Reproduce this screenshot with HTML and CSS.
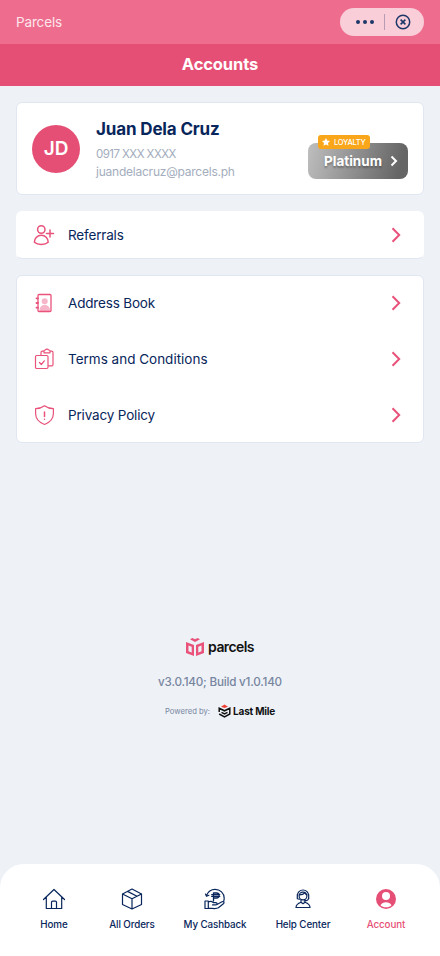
FILE: index.html
```html
<!DOCTYPE html>
<html lang="en">
<head>
<meta charset="utf-8">
<meta name="viewport" content="width=device-width, initial-scale=1">
<title>Accounts</title>
<link rel="stylesheet" href="styles.css">
</head>
<body>
<div class="app">
  <header class="topbar">
    <span class="app-name">Parcels</span>
    <div class="capsule">
      <svg width="18" height="4" viewBox="0 0 18 4" fill="#1c3768"><circle cx="2" cy="2" r="2"/><circle cx="9" cy="2" r="2"/><circle cx="16" cy="2" r="2"/></svg>
      <span class="divider"></span>
      <svg width="16" height="16" viewBox="0 0 16 16" fill="none" stroke="#1c3768" stroke-width="1.5"><circle cx="8" cy="8" r="6.700"/><path d="M5.600 5.600l4.800 4.800M10.400 5.600l-4.800 4.800" stroke-width="1.600"/></svg>
    </div>
  </header>
  <h1 class="title"><span>Accounts</span></h1>
  <main class="content">
    <section class="card profile">
      <div class="avatar"><span>JD</span></div>
      <div class="details">
        <h2 class="name">Juan Dela Cruz</h2>
        <p class="phone">0917 XXX XXXX</p>
        <p class="email">juandelacruz@parcels.ph</p>
      </div>
      <a class="tier">
        <span class="tier-name">Platinum</span>
        <svg width="8" height="12" viewBox="0 0 8 12" fill="none" stroke="#fff" stroke-width="2"><path d="M1.500 1.500L6 6l-4.500 4.500"/></svg>
        <span class="loyalty">
          <svg width="8" height="8" viewBox="0 0 24 24" fill="#fff"><path d="M12 0l3.700 7.800 8.300 1.200-6 6 1.500 8.500L12 19.400 4.500 23.500 6 15 0 9l8.300-1.200z"/></svg>
          <span>LOYALTY</span>
        </span>
      </a>
    </section>

    <nav class="card single">
      <a class="row">
        <svg class="icon" viewBox="0 0 24 24"><circle cx="9.300" cy="6.500" r="3.700"/><path d="M9.300 12.300c3.900 0 6.900 3.100 6.900 6.900-1.700 1.600-4.100 2.200-6.900 2.200s-5.200-.6-6.900-2.200c0-3.800 3-6.900 6.900-6.900zM14.500 10.500h7M18 7v7"/></svg>
        <span class="label tight">Referrals</span>
        <svg class="chevron" viewBox="0 0 10 16"><path d="M1.500 1.300L8.200 8l-6.700 6.700"/></svg>
      </a>
    </nav>

    <nav class="card list">
      <a class="row">
        <svg class="icon medium" viewBox="0 0 24 24"><g fill="#f6b5c8" stroke="none"><circle cx="12.700" cy="10.200" r="3"/><path d="M7.500 20v-1a5 5 0 0 1 10.500 0v1z"/></g><rect x="6" y="3.500" width="13" height="17" rx="1"/><path d="M4.500 7.300h1.500M4.500 12h1.500M4.500 16.700h1.500" stroke-width="1.800"/></svg>
        <span class="label tight">Address Book</span>
        <svg class="chevron" viewBox="0 0 10 16"><path d="M1.500 1.300L8.200 8l-6.700 6.700"/></svg>
      </a>
      <a class="row">
        <svg class="icon thin" viewBox="0 0 24 24"><rect x="3.500" y="8.500" width="12.500" height="13" rx="1.200"/><path d="M7.500 15.500l1.800 2 3-3.700M9 8V5.500c0-.8.500-1.300 1.300-1.300h1.700M18 4.200h1.700c.8 0 1.300.5 1.300 1.300v12c0 .8-.5 1.300-1.300 1.300H16.500M12 5.800V4c0-.6.400-1 1-1h.4c.6-1.200 2.500-1.200 3.200 0h.4c.6 0 1 .4 1 1v1.800z"/></svg>
        <span class="label">Terms and Conditions</span>
        <svg class="chevron" viewBox="0 0 10 16"><path d="M1.500 1.300L8.200 8l-6.700 6.700"/></svg>
      </a>
      <a class="row">
        <svg class="icon thin" viewBox="0 0 24 24"><path d="M12.500 2.700c2.600 2 5.500 2.900 8.900 2.900v5c0 4.900-3.500 8.900-8.900 10.900-5.400-2-8.900-6-8.900-10.900v-5c3.400 0 6.300-.9 8.900-2.900z"/><path d="M12.500 9v4.500M12.500 16.200v.1" stroke-width="1.500"/></svg>
        <span class="label tight">Privacy Policy</span>
        <svg class="chevron" viewBox="0 0 10 16"><path d="M1.500 1.300L8.200 8l-6.700 6.700"/></svg>
      </a>
    </nav>
  </main>

  <section class="about">
    <div class="brand">
      <svg width="18" height="20" viewBox="0 0 18 20" fill="#e9527a"><path fill-rule="evenodd" d="M0 5l8 3v11L0 16zM2.500 8.500v5.700l3.200 1.300V9.700zM18 5l-8 3v11l8-3zM15.500 8.500v5.700l-3.200 1.300V9.700zM4 2.300l2.400-1.300L9 2.300l2.600-1.300L14 2.300 9 5z"/></svg>
      <span>parcels</span>
    </div>
    <p class="version">v3.0.140; Build v1.0.140</p>
    <div class="powered">
      <span class="by">Powered by:</span>
      <svg width="13" height="14" viewBox="0 0 13 14" fill="none"><path d="M3 2.800L6.500 .5 10 2.800 6.500 4z" fill="#ee4035"/><path d="M1.200 8V4.300l5.300 2.500 5.300-2.500V10l-5.300 2.800L1.200 10M3.500 8.300l3 1.500 3-1.500" stroke="#111" stroke-width="1.500"/></svg>
      <span class="company">Last Mile</span>
    </div>
  </section>

  <nav class="tabs">
    <a class="tab">
      <svg viewBox="0 0 24 24"><path d="M1.500 12.500L12 2.500l10.500 10M4.300 10.300v11.200h15.400V10.300M9.500 21.500v-6.300c0-.7.400-1.100 1.100-1.100h2.800c.7 0 1.100.4 1.100 1.100v6.300"/></svg>
      <span>Home</span>
    </a>
    <a class="tab">
      <svg viewBox="0 0 24 24"><path d="M12 2l9.500 5v10.500L12 22l-9.500-4.500V7zM2.500 7l9.500 4.700L21.500 7M12 11.700V22M7.500 4.400l9.500 4.900"/></svg>
      <span>All Orders</span>
    </a>
    <a class="tab">
      <svg viewBox="0 0 24 24"><path d="M3.500 8.500C5 4.500 8.300 2.300 12 2.300c5.200 0 9.200 4 9.200 9 0 1-.2 2-.5 2.900M2.500 7l1 2.300 2.400-1"/><path d="M10.500 14V6h3c3.500 0 3.500 5 0 5h-3M8.700 7.600h8M8.700 9.400h8" stroke-width="1.300"/><path d="M2 14h3.300v7.500H2zM5.300 15c2-1 3.500-.8 5 .6h2.500c1.700 0 1.700 2.300 0 2.300H9.500M13.500 17.700l5.500-2.900c1.800-.8 2.800.9 1.400 2l-5 4c-2.500 1.500-5.400.5-10.100.3"/></svg>
      <span>My Cashback</span>
    </a>
    <a class="tab">
      <svg viewBox="0 0 24 24"><circle cx="12" cy="9" r="3.900"/><path d="M6.300 10.500V8.700a5.700 5.700 0 0 1 11.400 0v1.800c0 2-1.500 3.500-4.500 3.500M6.300 7.500v4.200l2 .6M17.700 7.500v4.200M8.300 7.800c3.200 0 4.500-.8 5.500-2 .5 1.200 1.200 1.700 2 2M10 13v2.200c-3.300 1.200-5 2.700-5 5.300h14c0-2.600-1.700-4.100-5-5.300V13M10 15.200l2 1.500 2-1.500"/></svg>
      <span>Help Center</span>
    </a>
    <a class="tab active">
      <svg viewBox="0 0 24 24"><circle cx="12" cy="12" r="10" fill="#e64f75" stroke="none"/><g fill="#fff" stroke="none"><circle cx="12" cy="9" r="4"/><path d="M6.500 18.300c1-2 3.200-3 5.500-3s4.500 1 5.500 3c-1.500 1.400-3.300 2-5.500 2s-4-.6-5.500-2z"/></g></svg>
      <span>Account</span>
    </a>
  </nav>
</div>
</body>
</html>
```

FILE: styles.css
```css
* { box-sizing: border-box; }
body, h1, h2, p { margin: 0; }
body { background: #eef2f7; color: #08265b; font-family: Inter, "Liberation Sans", sans-serif; }
svg { display: block; flex: none; }
span, p, h2 { white-space: nowrap; }
.app { height: 956px; display: flex; flex-direction: column; }

.topbar { height: 44px; padding: 0 16px; background: #ee6c8e; display: flex; align-items: center; justify-content: space-between; }
.app-name { font-size: 13.5px; line-height: 18px; padding-bottom: 1px; color: #fde6ec; letter-spacing: -0.15px; }
.capsule { width: 84px; height: 28px; border-radius: 14px; background: #f9ced9; display: flex; align-items: center; padding-left: 16px; }
.divider { width: 1px; height: 16px; background: #b79db3; margin: 0 10px; }
.title { height: 42px; padding-bottom: 3px; background: #e64f75; color: #fff; display: flex; align-items: center; justify-content: center; font-size: 16.5px; font-weight: 700; letter-spacing: -0.1px; }

.content { padding: 16px 16px 0; display: flex; flex-direction: column; gap: 16px; }
.card { background: #fff; border: 1px solid #e0e7f2; border-radius: 6px; }
.profile { height: 93px; display: flex; align-items: center; padding: 0 15px; }
.avatar { width: 48px; height: 48px; border-radius: 50%; background: #e64f75; color: #fff; display: flex; align-items: center; justify-content: center; font-size: 19px; font-weight: 600; }
.details { margin: 0 0 1px 16px; flex: 1; }
.name { font-size: 17px; line-height: 24px; font-weight: 700; letter-spacing: -0.15px; margin-bottom: 5px; }
.phone, .email { font-size: 12px; line-height: 17px; color: #a3adbd; letter-spacing: -0.23px; }
.phone { font-size: 11.5px; letter-spacing: -0.55px; }
.tier { position: relative; align-self: flex-start; margin-top: 40px; width: 100px; height: 36px; padding: 0 10px 0 16px; border-radius: 8px; background: linear-gradient(105deg, #bfbfbf, #656565 90%); display: flex; align-items: center; justify-content: space-between; color: #fff; }
.tier-name { font-size: 13.5px; font-weight: 700; letter-spacing: 0; text-shadow: 0 2px 2px rgba(0,0,0,.3); }
.loyalty { position: absolute; left: 10px; top: -8px; width: 52px; height: 14px; border-radius: 3px; background: #faa61a; display: flex; align-items: center; gap: 4px; padding-left: 4px; font-size: 7.5px; font-weight: 500; letter-spacing: -0.25px; }

.single { height: 48px; border-color: #fff #fff #e0e7f2; }
.list { height: 168px; }
.row { height: 46px; padding: 0 22px 0 15px; display: flex; align-items: center; }
.list .row { height: 56px; }
.list .row:first-child { margin-top: -1px; }
.icon { width: 24px; height: 24px; fill: none; stroke: #e9527a; stroke-width: 1.5; stroke-linecap: round; stroke-linejoin: round; }
.medium { stroke-width: 1.3; }
.thin { stroke-width: 1.2; }
.label { margin-left: 12px; flex: 1; font-size: 13.5px; line-height: 18px; padding-bottom: 1px; letter-spacing: 0; }
.tight { letter-spacing: -0.17px; }
.chevron { width: 10px; height: 16px; fill: none; stroke: #e9527a; stroke-width: 2; }

.about { margin-top: 194px; display: flex; flex-direction: column; align-items: center; }
.brand { height: 20px; display: flex; align-items: center; gap: 4px; color: #111; font-size: 14px; font-weight: 600; letter-spacing: -0.6px; }
.brand span { padding-bottom: 2px; }
.version { margin-top: 17px; font-size: 11.7px; line-height: 17px; font-weight: 500; color: #7885a0; letter-spacing: -0.22px; }
.powered { margin-top: 13px; height: 14px; display: flex; align-items: center; }
.by { font-size: 7.7px; color: #7885a0; margin-right: 8px; }
.company { margin-left: 2px; font-size: 10px; font-weight: 700; color: #111; letter-spacing: -0.2px; }

.tabs { margin-top: auto; height: 92px; background: #fff; border-radius: 24px 24px 0 0; display: grid; grid-template-columns: 72px 84px 82px 94px 72px; justify-content: center; padding: 23px 0 0; }
.tab { display: flex; flex-direction: column; align-items: center; gap: 6px; font-size: 9.8px; line-height: 16px; font-weight: 500; letter-spacing: -0.1px; }
.tab svg { width: 24px; height: 24px; fill: none; stroke: #08265b; stroke-width: 1.2; stroke-linejoin: round; stroke-linecap: round; }
.active { color: #e64f75; }
```
